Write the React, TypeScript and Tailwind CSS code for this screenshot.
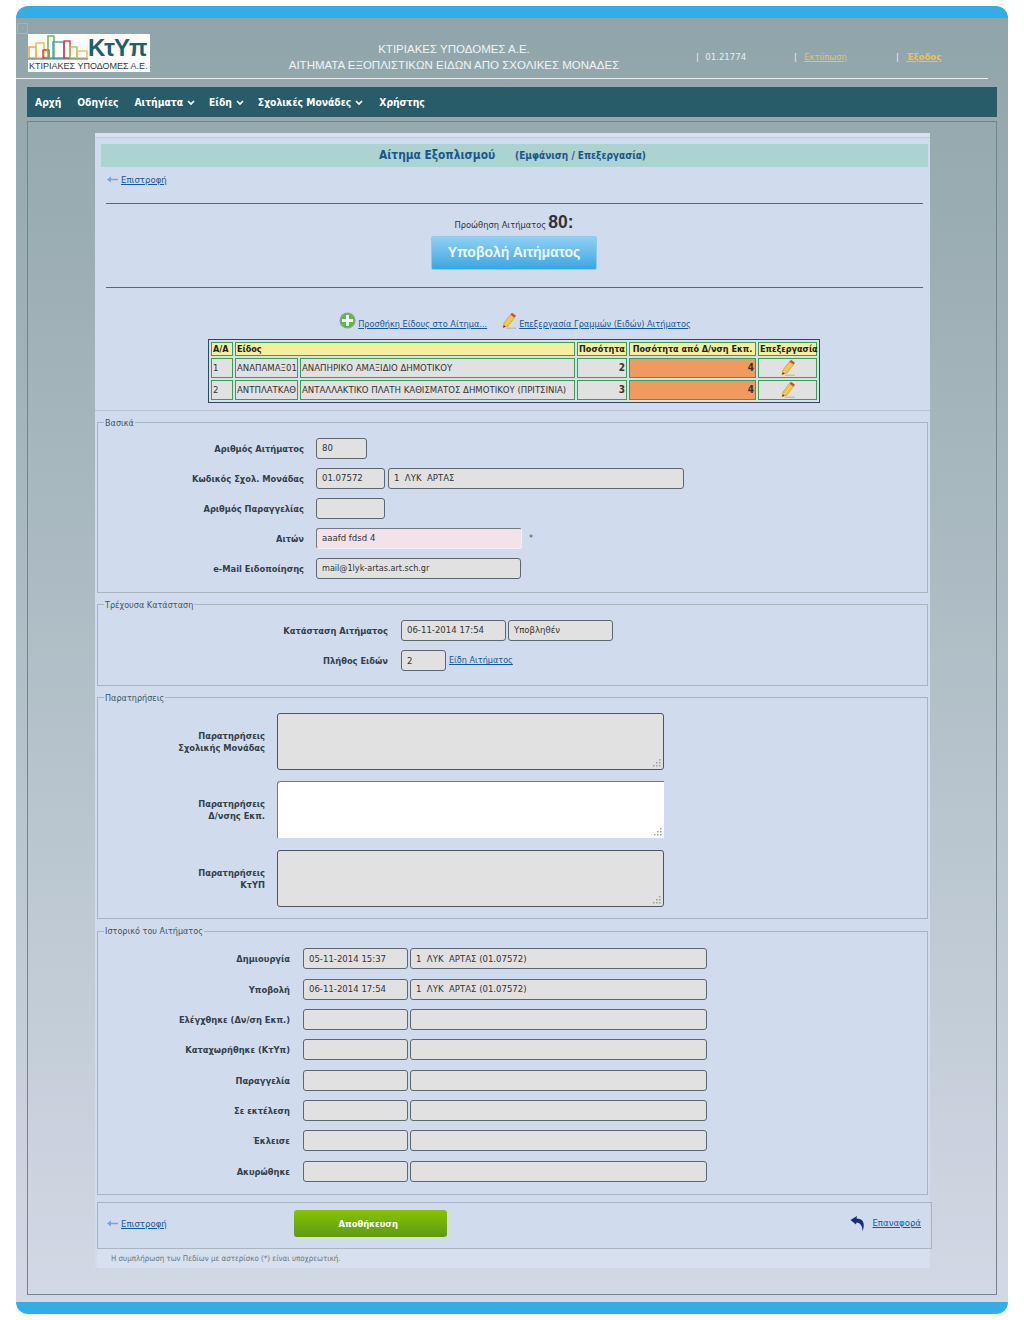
const tahoma = "font-['DejaVu_Sans',sans-serif] font-stretch-condensed";

const Back = () => (
  <a className="flex items-center gap-[3px] text-[9.5px] leading-[12px] text-[#14599c] underline">
    <svg width="11" height="7" viewBox="0 0 11 7">
      <path d="M0 3.5 L4 0.5 L4 2.8 L11 2.8 L11 4.2 L4 4.2 L4 6.5 Z" fill="#7f9fe0" />
    </svg>
    Επιστροφή
  </a>
);

const Pencil = () => (
  <svg width="16" height="17" viewBox="0 0 16 17">
    <path d="M3 11 L9.5 2.5 L13.5 5.5 L7 14 L2 15.5 Z" fill="#f7c64a" stroke="#c98a20" strokeWidth="0.6" />
    <path d="M9.5 2.5 L11 0.7 L15 3.7 L13.5 5.5 Z" fill="#cf4a2a" />
    <path d="M3 13.2 L4.7 14.7 L2 15.5 Z" fill="#333" />
    <path d="M5 16.2 L15 16.2" stroke="#a8a8a8" strokeWidth="0.8" />
  </svg>
);

const Input = ({ w, value = "", tone = "gray", small = false }: { w: string; value?: string; tone?: "gray" | "pink"; small?: boolean }) => (
  <div
    className={`${w} h-[21px] shrink-0 flex items-center pl-[5px] ${small ? "text-[9px]" : "text-[9.5px]"} text-[#333] rounded-[3px] whitespace-pre ${
      tone === "pink"
        ? "bg-[#f3e2e8] border-l border-t border-l-[#6f7a82] border-t-[#6f7a82] border-r border-b border-r-[#eef2f8] border-b-[#eef2f8]"
        : "bg-[#e1e1e1] border border-[#5d6770]"
    }`}
  >
    {value}
  </div>
);

const Label = ({ w, children }: { w: string; children: React.ReactNode }) => (
  <div className={`${w} shrink-0 text-right text-[9.25px] leading-[12px] pt-[1px] font-bold text-[#33404a] whitespace-nowrap`}>{children}</div>
);

const Fieldset = ({ legend, className, children }: { legend: string; className: string; children: React.ReactNode }) => (
  <fieldset className={`border border-[#a9b5c1] mx-[2px] w-[831px] ${className}`}>
    <legend className="ml-[6px] px-[1px] text-[9px] leading-[12px] text-[#46525c]">{legend}</legend>
    {children}
  </fieldset>
);

const Cell = ({ className = "", colSpan, children }: { className?: string; colSpan?: number; children?: React.ReactNode }) => (
  <td colSpan={colSpan} className={`border border-[#3f9a58] px-[1px] ${className}`}>{children}</td>
);

const rows = [
  ["1", "ΑΝΑΠΑΜΑΞ01", "ΑΝΑΠΗΡΙΚΟ ΑΜΑΞΙΔΙΟ ΔΗΜΟΤΙΚΟΥ", "2", "4"],
  ["2", "ΑΝΤΠΛΑΤΚΑΘ", "ΑΝΤΑΛΛΑΚΤΙΚΟ ΠΛΑΤΗ ΚΑΘΙΣΜΑΤΟΣ ΔΗΜΟΤΙΚΟΥ (ΠΡΙΤΣΙΝΙΑ)", "3", "4"],
];

const history = [
  ["Δημιουργία", "05-11-2014 15:37", "1  ΛΥΚ  ΑΡΤΑΣ (01.07572)"],
  ["Υποβολή", "06-11-2014 17:54", "1  ΛΥΚ  ΑΡΤΑΣ (01.07572)"],
  ["Ελέγχθηκε (Δν/ση Εκπ.)", "", ""],
  ["Καταχωρήθηκε (ΚτΥπ)", "", ""],
  ["Παραγγελία", "", ""],
  ["Σε εκτέλεση", "", ""],
  ["Έκλεισε", "", ""],
  ["Ακυρώθηκε", "", ""],
];

const Logo = () => (
  <div className="w-[122px] h-[38px] bg-white flex flex-col items-start overflow-hidden">
    <div className="flex items-end h-[26px]">
      <svg width="60" height="26" viewBox="0 0 60 26" fill="none" strokeWidth="1.4" className="shrink-0">
        <rect x="1" y="13" width="7" height="11" stroke="#f0a43a" />
        <rect x="8" y="9" width="8" height="15" stroke="#f2b64e" />
        <rect x="15" y="16" width="6" height="8" stroke="#d93a32" />
        <rect x="20" y="2" width="6" height="22" stroke="#5fb548" />
        <rect x="25" y="8" width="11" height="16" stroke="#3a9bd6" />
        <rect x="36" y="7" width="6" height="17" stroke="#d93a32" />
        <rect x="42" y="13" width="7" height="11" stroke="#a8c84a" />
        <rect x="49" y="17" width="10" height="7" stroke="#f0b45a" />
        <path d="M0 25 H60" stroke="#2f7f8f" strokeWidth="1" />
      </svg>
      <span className="text-[24px] leading-[25px] font-bold text-[#1f5f6e] tracking-[-1px] whitespace-nowrap font-['Liberation_Sans',sans-serif] font-stretch-normal">
        ΚτΥπ
      </span>
    </div>
    <div className="pl-[1px] mt-[1px] text-[9px] leading-[10px] font-['Liberation_Sans',sans-serif] text-[#1f3c48] whitespace-nowrap">
      ΚΤΙΡΙΑΚΕΣ ΥΠΟΔΟΜΕΣ Α.Ε.
    </div>
  </div>
);

const Chevron = () => (
  <svg width="8" height="6" viewBox="0 0 8 6" className="ml-[4px] mt-[1px]">
    <path d="M1 1 L4 4 L7 1" stroke="#fff" strokeWidth="1.6" fill="none" />
  </svg>
);

export default function App() {
  return (
    <div className={`w-[1024px] h-[1320px] bg-white pt-[6px] px-[16px] ${tahoma}`}>
      <div className="h-[12px] bg-[#33ade6] rounded-t-[12px]" />
      <div className="h-[1284px] bg-gradient-to-b from-[#90a5a9] to-[#d2d9e6] px-[11px]">
        {/* header */}
        <div className="relative h-[60px] -ml-[11px] mr-[9px] border-b border-[#e6edf0] box-content">
          <div className="absolute left-[1px] top-[5px] w-[11px] h-[11px] border border-[#c4b36a] text-[8px] leading-[8px] text-center text-[#c4b36a]">-</div>
          <div className="flex items-start">
            <div className="ml-[12px] mt-[16px]">
              <Logo />
            </div>
            <div className="w-[350px] ml-[129px] mt-[23px] text-center text-[11.5px] leading-[16px] text-[#f0f4f5] font-['Liberation_Sans',sans-serif] font-stretch-normal whitespace-nowrap">
              <div>ΚΤΙΡΙΑΚΕΣ ΥΠΟΔΟΜΕΣ Α.Ε.</div>
              <div>ΑΙΤΗΜΑΤΑ ΕΞΟΠΛΙΣΤΙΚΩΝ ΕΙΔΩΝ ΑΠΟ ΣΧΟΛΙΚΕΣ ΜΟΝΑΔΕΣ</div>
            </div>
            <div className="flex mt-[33px] text-[9.5px] leading-[12px] whitespace-nowrap ml-[67px]">
              <span className="w-[98px] text-[#e8eef0]">|&nbsp; <span className="ml-[1px]">01.21774</span></span>
              <span className="w-[102px] text-[#e8eef0]">|&nbsp; <a className="ml-[2px] text-[9.25px] text-[#e8c268] underline">Εκτύπωση</a></span>
              <span className="text-[#e8eef0]">|&nbsp; <a className="ml-[2px] font-bold text-[9.5px] text-[#f0c050] underline">Έξοδος</a></span>
            </div>
          </div>
        </div>

        {/* menu */}
        <div className="mt-[8px] h-[30px] w-[970px] bg-[#285c68] flex items-center pl-[8px] pt-[1px] text-[10.25px] font-bold text-white whitespace-nowrap">
          <span className="mr-[16px]">Αρχή</span>
          <span className="mr-[16px]">Οδηγίες</span>
          <span className="flex items-center mr-[14px]">Αιτήματα<Chevron /></span>
          <span className="flex items-center mr-[14px]">Είδη<Chevron /></span>
          <span className="flex items-center mr-[16px]">Σχολικές Μονάδες<Chevron /></span>
          <span>Χρήστης</span>
        </div>

        {/* content frame */}
        <div className="mt-[4px] w-[970px] h-[1174px] border border-[#75848a] pt-[11px] pl-[67px]">
          <div className="w-[835px] h-[1135px] bg-[#d0dcee] flex flex-col">
            <div className="h-[5px] bg-[#d8e0f0] border-b border-[#c0ccd8]" />
            <div className="ml-[6px] mt-[6px] w-[827px] h-[23px] pt-[1px] bg-[#abd3cf] flex items-center justify-center font-bold text-[#1a5590] whitespace-nowrap pr-[4px]">
              <span className="text-[11.8px]">Αίτημα Εξοπλισμού</span>
              <span className="text-[10px] ml-[20px]">(Εμφάνιση / Επεξεργασία)</span>
            </div>
            <div className="ml-[12px] mt-[7px]"><Back /></div>
            <div className="ml-[11px] mt-[17px] w-[817px] h-px bg-[#5c6670]" />
            <div className="mt-[9px] flex justify-center items-end h-[19px] pl-[3px] text-[#333] whitespace-nowrap">
              <span className="text-[9.25px] leading-[14px]">Προώθηση Αιτήματος</span>
              <span className="ml-[2px] text-[17.5px] leading-[19px] font-bold font-['Liberation_Sans',sans-serif] font-stretch-normal">80:</span>
            </div>
            <div className="mt-[4px] ml-[336px] w-[166px] h-[34px] rounded-[2px] border border-[#8fcbef] bg-gradient-to-b from-[#8fd0f4] to-[#36a6e2] flex items-center justify-center text-[14px] font-bold text-[#eef8fd] font-['Liberation_Sans',sans-serif] font-stretch-normal">
              Υποβολή Αιτήματος
            </div>
            <div className="ml-[11px] mt-[17px] w-[817px] h-px bg-[#5c6670]" />
            <div className="mt-[22px] h-[20px] flex justify-center items-end text-[9.1px] leading-[12px] text-[#14599c] whitespace-nowrap gap-[14px] pl-[5px]">
              <a className="flex items-end underline">
                <svg width="17" height="17" viewBox="0 0 17 17" className="mr-[2px] mb-[1px]">
                  <circle cx="8.5" cy="8.5" r="7.5" fill="#5cb84a" stroke="#8fa396" strokeWidth="1.2" />
                  <rect x="3" y="7" width="11" height="3" fill="#f2fbef" />
                  <rect x="7" y="3" width="3" height="11" fill="#f2fbef" />
                </svg>
                Προσθήκη Είδους στο Αίτημα...
              </a>
              <a className="flex items-end underline">
                <span className="mr-[2px] mb-[1px]"><Pencil /></span>
                Επεξεργασία Γραμμών (Ειδών) Αιτήματος
              </a>
            </div>

            <table className="mt-[9px] ml-[113px] w-[612px] h-[64px] border-separate border-spacing-[2px] border border-[#33475c] bg-[#cfe6e4] text-[9.5px] leading-[12px] text-[#333] whitespace-nowrap table-fixed">
              <colgroup>
                <col className="w-[22px]" />
                <col className="w-[63px]" />
                <col className="w-[275px]" />
                <col className="w-[50px]" />
                <col className="w-[127px]" />
                <col className="w-[59px]" />
              </colgroup>
              <tbody>
                <tr className="h-[14px] bg-[#f5ee9c] font-bold text-[#222] text-[9px]">
                  <Cell>Α/Α</Cell>
                  <Cell colSpan={2}>Είδος</Cell>
                  <Cell className="text-center">Ποσότητα</Cell>
                  <Cell className="text-center">Ποσότητα από Δ/νση Εκπ.</Cell>
                  <Cell className="text-center">Επεξεργασία</Cell>
                </tr>
                {rows.map((r) => (
                  <tr key={r[0]} className="h-[20px] bg-[#e1e1e1]">
                    <Cell>{r[0]}</Cell>
                    <Cell className="overflow-hidden">{r[1]}</Cell>
                    <Cell className="overflow-hidden">{r[2]}</Cell>
                    <Cell className="text-right font-bold text-[10px]">{r[3]}</Cell>
                    <Cell className="text-right bg-[#f09a60] font-bold text-[10px]">{r[4]}</Cell>
                    <Cell><div className="flex justify-center"><Pencil /></div></Cell>
                  </tr>
                ))}
              </tbody>
            </table>

            <div className="mt-[7px] h-px bg-[#b6c2ce]" />

            <Fieldset legend="Βασικά" className="mt-[6px] h-[176px] pt-[9px]">
              <div className="flex flex-col gap-[9px]">
                <div className="flex items-center gap-[12px]">
                  <Label w="w-[206px]">Αριθμός Αιτήματος</Label>
                  <Input w="w-[51px]" value="80" />
                </div>
                <div className="flex items-center gap-[12px]">
                  <Label w="w-[206px]">Κωδικός Σχολ. Μονάδας</Label>
                  <div className="flex gap-[3px]">
                    <Input w="w-[69px]" value="01.07572" />
                    <Input w="w-[296px]" value="1  ΛΥΚ  ΑΡΤΑΣ" />
                  </div>
                </div>
                <div className="flex items-center gap-[12px]">
                  <Label w="w-[206px]">Αριθμός Παραγγελίας</Label>
                  <Input w="w-[69px]" />
                </div>
                <div className="flex items-center gap-[12px]">
                  <Label w="w-[206px]">Αιτών</Label>
                  <Input w="w-[206px]" value="aaafd fdsd 4" tone="pink" />
                  <span className="-ml-[5px] text-[9px] text-[#555]">*</span>
                </div>
                <div className="flex items-center gap-[12px]">
                  <Label w="w-[206px]">e-Mail Ειδοποίησης</Label>
                  <Input w="w-[205px]" value="mail@1lyk-artas.art.sch.gr" small />
                </div>
              </div>
            </Fieldset>

            <Fieldset legend="Τρέχουσα Κατάσταση" className="mt-[6px] h-[87px] pt-[9px]">
              <div className="flex flex-col gap-[9.5px]">
                <div className="flex items-center gap-[13px]">
                  <Label w="w-[290px]">Κατάσταση Αιτήματος</Label>
                  <div className="flex gap-[2px]">
                    <Input w="w-[105px]" value="06-11-2014 17:54" />
                    <Input w="w-[105px]" value="Υποβληθέν" />
                  </div>
                </div>
                <div className="flex items-center gap-[13px]">
                  <Label w="w-[290px]">Πλήθος Ειδών</Label>
                  <div className="flex items-center gap-[3px]">
                    <Input w="w-[45px]" value="2" />
                    <a className="pt-[1px] text-[9px] text-[#14599c] underline">Είδη Αιτήματος</a>
                  </div>
                </div>
              </div>
            </Fieldset>

            <Fieldset legend="Παρατηρήσεις" className="mt-[6px] h-[228px] pt-[9px]">
              <div className="flex flex-col gap-[11.5px]">
                {[
                  ["Παρατηρήσεις", "Σχολικής Μονάδας", "bg-[#e1e1e1] border border-[#4d5660] rounded-[3px]"],
                  ["Παρατηρήσεις", "Δ/νσης Εκπ.", "bg-white border-l border-t border-[#6f7a82] rounded-tl-[3px]"],
                  ["Παρατηρήσεις", "ΚτΥΠ", "bg-[#e1e1e1] border border-[#4d5660] rounded-[3px]"],
                ].map((r) => (
                  <div key={r[1]} className="flex items-center gap-[12px]">
                    <Label w="w-[167px]">
                      {r[0]}
                      <br />
                      {r[1]}
                    </Label>
                    <div className={`w-[387px] h-[57px] flex justify-end items-end pr-[1px] pb-[1px] ${r[2]}`}>
                      <svg width="9" height="9" viewBox="0 0 9 9" fill="#a0a0a0">
                        <rect x="6" y="0" width="1.5" height="1.5" />
                        <rect x="3" y="3" width="1.5" height="1.5" />
                        <rect x="6" y="3" width="1.5" height="1.5" />
                        <rect x="0" y="6" width="1.5" height="1.5" />
                        <rect x="3" y="6" width="1.5" height="1.5" />
                        <rect x="6" y="6" width="1.5" height="1.5" />
                      </svg>
                    </div>
                  </div>
                ))}
              </div>
            </Fieldset>

            <Fieldset legend="Ιστορικό του Αιτήματος" className="mt-[6px] h-[270px] pt-[11px]">
              <div className="flex flex-col gap-[9.35px]">
                {history.map((h) => (
                  <div key={h[0]} className="flex items-center gap-[13px]">
                    <Label w="w-[192px]">{h[0]}</Label>
                    <div className="flex gap-[2px]">
                      <Input w="w-[105px]" value={h[1]} />
                      <Input w="w-[297px]" value={h[2]} />
                    </div>
                  </div>
                ))}
              </div>
            </Fieldset>

            {/* footer */}
            <div className="mt-[7px] ml-[2px] w-[835px] h-[47px] border border-[#a9b5c1] flex items-center pl-[9px] pr-[10px] pb-[4px]">
              <Back />
              <div className="ml-[127px] w-[153px] h-[27px] pr-[4px] rounded-[3px] bg-gradient-to-b from-[#86c400] to-[#5f9a10] flex items-center justify-center text-[9.3px] font-bold text-white">
                Αποθήκευση
              </div>
              <a className="ml-auto flex items-center gap-[6px] text-[9.5px] text-[#14599c] underline">
                <svg width="16" height="17" viewBox="0 0 16 17">
                  <path d="M0.5 5 L7 1 L6.5 3.5 C12 3.5 16 7 12.5 16.5 C12.5 11 10.5 8 6.5 7.5 L6 9.5 Z" fill="#1c2a78" />
                </svg>
                Επαναφορά
              </a>
            </div>
            <div className="ml-[2px] w-[833px] h-[19px] bg-[#d6e0ee] pl-[14px] flex items-center text-[7.9px] text-[#6b7683] whitespace-nowrap">
              Η συμπλήρωση των Πεδίων με αστερίσκο (*) είναι υποχρεωτική.
            </div>
          </div>
        </div>
      </div>
      <div className="h-[12px] bg-[#33ade6] rounded-b-[12px]" />
    </div>
  );
}
